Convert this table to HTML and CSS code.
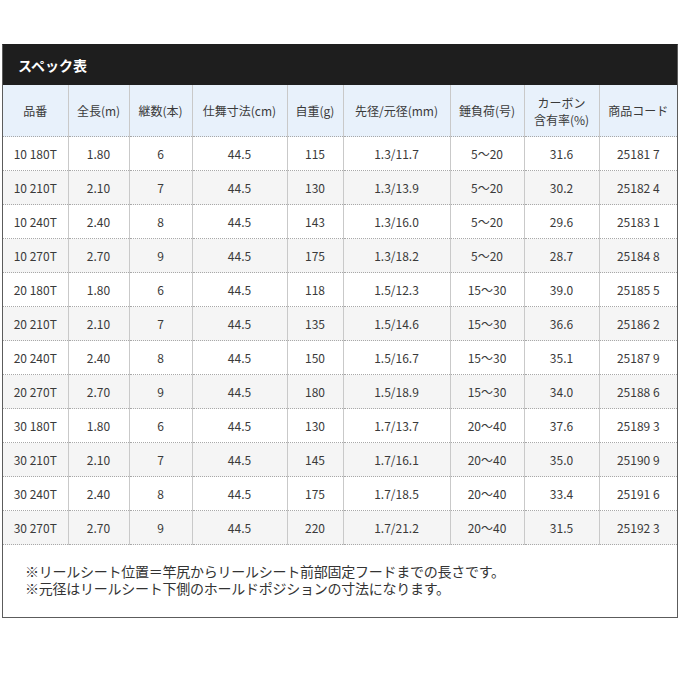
FILE: index.html
```html
<!DOCTYPE html>
<html lang="ja">
<head>
<meta charset="utf-8">
<title>スペック表</title>
<link rel="stylesheet" href="styles.css">
</head>
<body>
<section class="spec">
  <h2 class="spec-title">スペック表</h2>
  <table class="spec-table">
    <colgroup>
      <col class="c1"><col class="c2"><col class="c3"><col class="c4"><col class="c5"><col class="c6"><col class="c7"><col class="c8"><col class="c9">
    </colgroup>
    <thead>
      <tr>
        <th>品番</th><th>全長(m)</th><th>継数(本)</th><th>仕舞寸法(cm)</th><th>自重(g)</th><th>先径/元径(mm)</th><th>錘負荷(号)</th><th>カーボン<br>含有率(%)</th><th>商品コード</th>
      </tr>
    </thead>
    <tbody>
      <tr><td>10 180T</td><td>1.80</td><td>6</td><td>44.5</td><td>115</td><td>1.3/11.7</td><td>5～20</td><td>31.6</td><td>25181 7</td></tr>
      <tr><td>10 210T</td><td>2.10</td><td>7</td><td>44.5</td><td>130</td><td>1.3/13.9</td><td>5～20</td><td>30.2</td><td>25182 4</td></tr>
      <tr><td>10 240T</td><td>2.40</td><td>8</td><td>44.5</td><td>143</td><td>1.3/16.0</td><td>5～20</td><td>29.6</td><td>25183 1</td></tr>
      <tr><td>10 270T</td><td>2.70</td><td>9</td><td>44.5</td><td>175</td><td>1.3/18.2</td><td>5～20</td><td>28.7</td><td>25184 8</td></tr>
      <tr><td>20 180T</td><td>1.80</td><td>6</td><td>44.5</td><td>118</td><td>1.5/12.3</td><td>15～30</td><td>39.0</td><td>25185 5</td></tr>
      <tr><td>20 210T</td><td>2.10</td><td>7</td><td>44.5</td><td>135</td><td>1.5/14.6</td><td>15～30</td><td>36.6</td><td>25186 2</td></tr>
      <tr><td>20 240T</td><td>2.40</td><td>8</td><td>44.5</td><td>150</td><td>1.5/16.7</td><td>15～30</td><td>35.1</td><td>25187 9</td></tr>
      <tr><td>20 270T</td><td>2.70</td><td>9</td><td>44.5</td><td>180</td><td>1.5/18.9</td><td>15～30</td><td>34.0</td><td>25188 6</td></tr>
      <tr><td>30 180T</td><td>1.80</td><td>6</td><td>44.5</td><td>130</td><td>1.7/13.7</td><td>20～40</td><td>37.6</td><td>25189 3</td></tr>
      <tr><td>30 210T</td><td>2.10</td><td>7</td><td>44.5</td><td>145</td><td>1.7/16.1</td><td>20～40</td><td>35.0</td><td>25190 9</td></tr>
      <tr><td>30 240T</td><td>2.40</td><td>8</td><td>44.5</td><td>175</td><td>1.7/18.5</td><td>20～40</td><td>33.4</td><td>25191 6</td></tr>
      <tr><td>30 270T</td><td>2.70</td><td>9</td><td>44.5</td><td>220</td><td>1.7/21.2</td><td>20～40</td><td>31.5</td><td>25192 3</td></tr>
    </tbody>
  </table>
  <div class="spec-notes">
    <p>※リールシート位置＝竿尻からリールシート前部固定フードまでの長さです。</p>
    <p>※元径はリールシート下側のホールドポジションの寸法になります。</p>
  </div>
</section>
</body>
</html>
```

FILE: styles.css
```css
html, body {
  margin: 0;
  padding: 0;
  background: #ffffff;
}

body {
  font-family: "Noto Sans CJK JP", "Noto Sans", sans-serif;
  color: #333333;
  padding-top: 44px;
  padding-left: 2px;
}

.spec {
  width: 676px;
  box-sizing: border-box;
  border: 1px solid #5c5c5c;
  border-top-color: #1e1e1e;
  background: #ffffff;
}

.spec-title {
  margin: 0;
  height: 40px;
  background: #1e1e1e;
  color: #ffffff;
  font-size: 14px;
  font-weight: bold;
  line-height: 40px;
  padding-left: 15px;
}

.spec-table {
  width: 674px;
  table-layout: fixed;
  border-collapse: collapse;
  border-spacing: 0;
  font-size: 12px;
}

.c1 { width: 65px; }
.c2 { width: 61px; }
.c3 { width: 63px; }
.c4 { width: 95px; }
.c5 { width: 56px; }
.c6 { width: 107px; }
.c7 { width: 74px; }
.c8 { width: 75px; }
.c9 { width: 78px; }

.spec-table th,
.spec-table td {
  padding: 0;
  text-align: center;
  vertical-align: middle;
  border-left: 1px solid #c9c9c9;
  border-bottom: 1px dotted #a8a8a8;
  white-space: nowrap;
}

.spec-table th:first-child,
.spec-table td:first-child {
  border-left: none;
}

.spec-table th {
  height: 51px;
  background: #e8f1fb;
  font-weight: normal;
  color: #3a3a3a;
  line-height: 17px;
}

.spec-table td {
  height: 33px;
  color: #3a3a3a;
  line-height: 16px;
}

.spec-table tbody tr:nth-child(even) td {
  background: #f5f5f5;
}

.spec-notes {
  padding: 18px 0 20px 22px;
  font-size: 14px;
  line-height: 17px;
  color: #333333;
  letter-spacing: -0.25px;
}

.spec-notes p {
  margin: 0;
}
```
